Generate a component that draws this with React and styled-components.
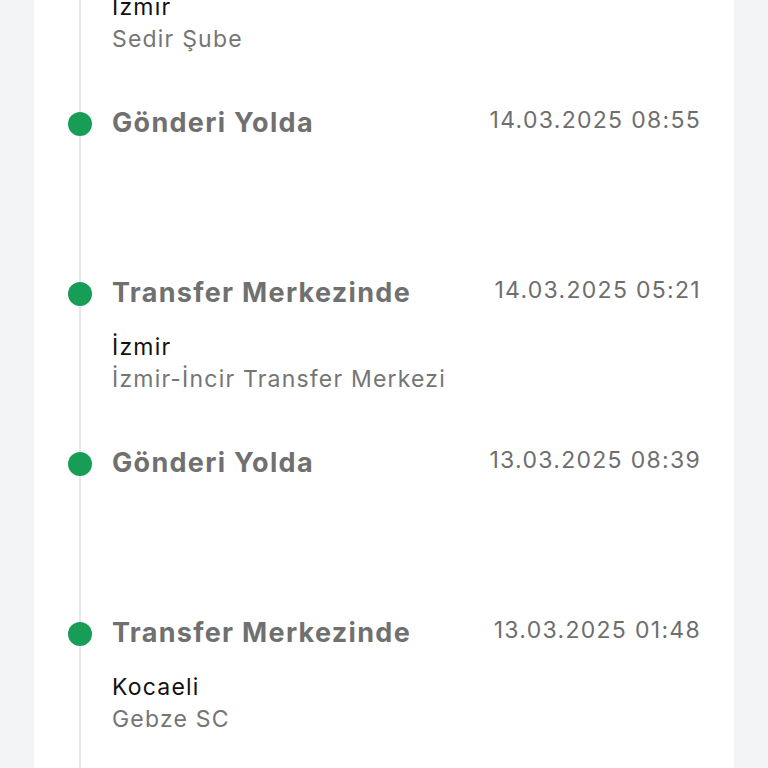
import React from 'react';
import styled, { createGlobalStyle } from 'styled-components';

const events = [
  { title: 'Şubede', date: '14.03.2025 12:10', city: 'İzmir', place: 'Sedir Şube' },
  { title: 'Gönderi Yolda', date: '14.03.2025 08:55' },
  { title: 'Transfer Merkezinde', date: '14.03.2025 05:21', city: 'İzmir', place: 'İzmir-İncir Transfer Merkezi' },
  { title: 'Gönderi Yolda', date: '13.03.2025 08:39' },
  { title: 'Transfer Merkezinde', date: '13.03.2025 01:48', city: 'Kocaeli', place: 'Gebze SC' },
];

export default function App() {
  return (
    <>
      <GlobalStyle />
      <S_Page>
        <S_Card>
          {events.map((each, i) => (
            <S_Item key={i}>
              <S_Dot />
              <S_Header>
                <S_Title>{each.title}</S_Title>
                <S_Date>{each.date}</S_Date>
              </S_Header>
              <S_Location>
                <S_City>{each.city || '\u00a0'}</S_City>
                <S_Place>{each.place || '\u00a0'}</S_Place>
              </S_Location>
            </S_Item>
          ))}
        </S_Card>
      </S_Page>
    </>
  );
}

const GlobalStyle = createGlobalStyle`
  body {
    margin: 0;
    background: #f3f4f6;
    font-family: Inter, "Noto Sans", sans-serif;
    overflow: hidden;
  }
`;

const S_Page = styled.div`
  margin-top: -64px;
  padding: 0 34px;
`;

const S_Card = styled.div`
  background: #ffffff;
  padding: 0 34px 0 45px;
`;

const S_Item = styled.div`
  position: relative;
  border-left: 2px solid #e5e7eb;
  padding: 0 0 51px 31px;
`;

const S_Dot = styled.span`
  position: absolute;
  left: -13px;
  top: 6px;
  width: 24px;
  height: 24px;
  border-radius: 50%;
  background: #189d57;
`;

const S_Header = styled.div`
  display: flex;
  justify-content: space-between;
  align-items: center;
  height: 32px;
`;

const S_Title = styled.span`
  font-size: 27px;
  font-weight: 700;
  letter-spacing: 1.3px;
  color: #707070;
`;

const S_Date = styled.span`
  font-size: 23px;
  letter-spacing: 1.3px;
  color: #6e6e6e;
  margin-top: -4px;
  margin-right: -1px;
`;

const S_Location = styled.div`
  margin-top: 23px;
  font-size: 23px;
  letter-spacing: 1.2px;
  line-height: 32px;
`;

const S_City = styled.div`
  color: #111111;
`;

const S_Place = styled.div`
  color: #757575;
`;
